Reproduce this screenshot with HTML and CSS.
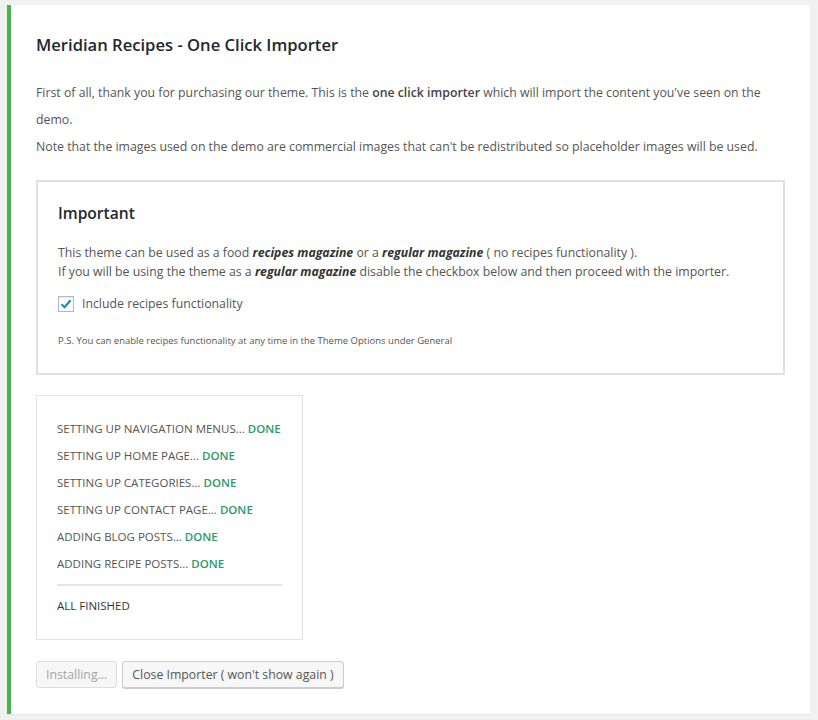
FILE: index.html
```html
<!DOCTYPE html>
<html lang="en">
<head>
    <meta charset="UTF-8">
    <meta name="viewport" content="width=device-width, initial-scale=1.0">
    <title>Meridian Recipes - One Click Importer</title>
    <link rel="stylesheet" href="styles.css">
</head>
<body>

<div class="notice">
    <h2 class="notice-title">Meridian Recipes - One Click Importer</h2>

    <p class="intro">First of all, thank you for purchasing our theme. This is the <strong>one click importer</strong> which will import the content you've seen on the demo.<br>
    Note that the images used on the demo are commercial images that can't be redistributed so placeholder images will be used.</p>

    <!-- recipes option -->
    <div class="important">
        <h3>Important</h3>
        <p class="important-text">This theme can be used as a food <strong><em>recipes magazine</em></strong> or a <strong><em>regular magazine</em></strong> ( no recipes functionality ).<br>
        If you will be using the theme as a <strong><em>regular magazine</em></strong> disable the checkbox below and then proceed with the importer.</p>
        <label class="check">
            <span class="check-box">
                <svg width="14" height="14" viewBox="0 0 14 14"><path d="M2.5 7.2 L5.6 10.2 L11.6 3.2" fill="none" stroke="#1e8cbe" stroke-width="2.2"/></svg>
            </span>
            Include recipes functionality
        </label>
        <p class="ps">P.S. You can enable recipes functionality at any time in the Theme Options under General</p>
    </div>

    <!-- import progress -->
    <div class="progress">
        <div class="step">Setting up navigation menus... <span class="done">Done</span></div>
        <div class="step">Setting up home page... <span class="done">Done</span></div>
        <div class="step">Setting up categories... <span class="done">Done</span></div>
        <div class="step">Setting up contact page... <span class="done">Done</span></div>
        <div class="step">Adding blog posts... <span class="done">Done</span></div>
        <div class="step">Adding recipe posts... <span class="done">Done</span></div>
        <div class="finished">All finished</div>
    </div>

    <div class="actions">
        <button class="btn" disabled>Installing...</button>
        <button class="btn">Close Importer ( won't show again )</button>
    </div>
</div>

</body>
</html>
```

FILE: styles.css
```css
body {
    margin: 0;
    padding: 5px 7px 6px 7px;
    background-color: #f1f1f1;
    font-family: "Open Sans", "Noto Sans", sans-serif;
    color: #444;
}

.notice {
    width: 749px;
    background-color: #fff;
    border-left: 4px solid #46b450;
    box-shadow: 0 1px 1px rgba(0, 0, 0, 0.04);
    padding: 1px 25px 26px 25px;
}

.notice-title {
    font-size: 16.6px;
    font-weight: 600;
    color: #23282d;
    margin: 28px 0 0 0;
    line-height: 22px;
}

.intro {
    font-size: 12.3px;
    line-height: 27px;
    color: #555;
    margin: 23px 0 0 0;
}

.intro strong {
    font-weight: 600;
    color: #444;
}

.important {
    margin-top: 20px;
    border: 2px solid #e0e0e0;
    padding: 20px 20px 25px 20px;
}

.important h3 {
    font-size: 15.6px;
    font-weight: 600;
    color: #23282d;
    margin: 0;
    line-height: 22px;
}

.important-text {
    font-size: 12.3px;
    line-height: 19px;
    color: #555;
    margin: 19px 0 0 0;
}

.important-text strong {
    font-weight: 700;
    color: #333;
}

.check {
    display: flex;
    align-items: center;
    gap: 8px;
    margin-top: 14px;
    font-size: 12.3px;
    color: #555;
}

.check-box {
    width: 16px;
    height: 16px;
    box-sizing: border-box;
    border: 1px solid #b4b9be;
    box-shadow: inset 0 1px 2px rgba(0, 0, 0, 0.1);
    display: flex;
    align-items: center;
    justify-content: center;
}

.ps {
    font-size: 9.5px;
    color: #555;
    margin: 22px 0 0 0;
    line-height: 14px;
}

.progress {
    width: 225px;
    margin-top: 20px;
    border: 1px solid #e2e2e2;
    padding: 19px 20px 23px 20px;
}

.step {
    font-size: 11.5px;
    text-transform: uppercase;
    color: #555;
    line-height: 27px;
}

.done {
    color: #2a9a6a;
    font-weight: 600;
}

.finished {
    font-size: 11.5px;
    text-transform: uppercase;
    color: #333;
    border-top: 2px solid #e5e5e5;
    margin-top: 7px;
    padding-top: 10px;
    line-height: 20px;
}

.actions {
    display: flex;
    gap: 5px;
    margin-top: 21px;
}

.btn {
    font-family: inherit;
    font-size: 12.3px;
    color: #555;
    background-color: #f7f7f7;
    border: 1px solid #ccc;
    border-radius: 3px;
    box-shadow: 0 1px 0 #ccc;
    height: 27px;
    padding: 0 9px;
    cursor: pointer;
}

.btn:disabled {
    color: #a0a5aa;
    background-color: #f7f7f7;
    border-color: #ddd;
    box-shadow: none;
    cursor: default;
}
```
